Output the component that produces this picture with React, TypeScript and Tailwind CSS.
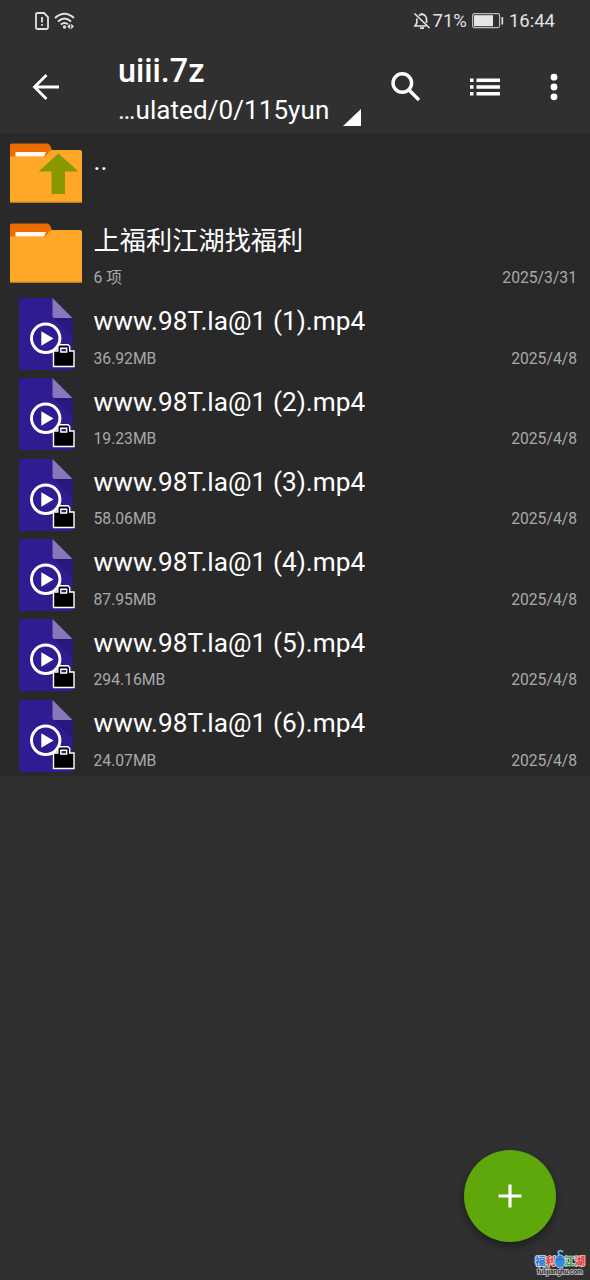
type Entry = {
    name: string;
    kind: 'up' | 'folder' | 'video';
    info?: string;
    date?: string;
};

const entries: Entry[] = [
    { name: '..', kind: 'up' },
    { name: '上福利江湖找福利', kind: 'folder', info: '6 项', date: '2025/3/31' },
    { name: 'www.98T.la@1 (1).mp4', kind: 'video', info: '36.92MB', date: '2025/4/8' },
    { name: 'www.98T.la@1 (2).mp4', kind: 'video', info: '19.23MB', date: '2025/4/8' },
    { name: 'www.98T.la@1 (3).mp4', kind: 'video', info: '58.06MB', date: '2025/4/8' },
    { name: 'www.98T.la@1 (4).mp4', kind: 'video', info: '87.95MB', date: '2025/4/8' },
    { name: 'www.98T.la@1 (5).mp4', kind: 'video', info: '294.16MB', date: '2025/4/8' },
    { name: 'www.98T.la@1 (6).mp4', kind: 'video', info: '24.07MB', date: '2025/4/8' },
];

const FolderIcon = ({ up }: { up?: boolean }) => (
    <svg viewBox="0 0 72 72" className="h-[72px] w-[72px] shrink-0">
        <path d="M0 24V8.500Q0 6.500 2 6.500H37Q39 6.500 40 8.500L43 15V24Z" fill="#ef6c00" />
        <path d="M0 19.500H35L39.500 14.500Q41 13 43 13H70Q72 13 72 15V65.500H0Z" fill="#ffa726" />
        <path d="M5.500 15H36L34 19.500H5.500Z" fill="#fff8ee" />
        <path d="M0 64.500H72V65.500H0Z" fill="#dc8d20" />
        {up && <path d="M48.300 16.500L68.500 34.500H55V57H41.500V34.500H28.500Z" fill="#889800" />}
    </svg>
);

const VideoIcon = () => (
    <svg viewBox="0 0 72 72" className="h-[72px] w-[72px] shrink-0">
        <path d="M11 0H42.500L62.500 20V72H11Q9 72 9 70V2Q9 0 11 0Z" fill="#311b92" />
        <path d="M44 20H62.500V39Z" fill="#2a177e" />
        <path d="M42.500 0L62.500 20H44.500Q42.500 20 42.500 18Z" fill="#8778b9" />
        <circle cx="35.700" cy="40.300" r="14.200" fill="none" stroke="#fff" strokeWidth="3" />
        <path d="M31.300 33.300L43.500 40.500L31.300 47.800Z" fill="#fff" />
        <path
            d="M43.500 53H47.800V48.500L49.500 46.800H58L59.700 48.500V53H64V68.500H43.500Z"
            fill="#000"
            stroke="#fff"
            strokeWidth="1.400"
        />
        <path d="M50.800 54V50.300H56.700V54Z" fill="#311b92" stroke="#fff" strokeWidth="1.400" />
    </svg>
);

const StatusBar = () => (
    <div className="flex h-10 items-center pl-[35px] pr-[35px] pt-[2px] text-[#e2e2e2]">
        <svg viewBox="0 0 14 18" className="h-[18px] w-[14px]" fill="none" stroke="currentColor" strokeWidth="1.800">
            <path d="M2.500 1H9L13 5V15.500Q13 17 11.500 17H2.500Q1 17 1 15.500V2.500Q1 1 2.500 1Z" />
            <path d="M7 5V10.500M7 12V13.800" />
        </svg>
        <svg viewBox="0 0 22 18" className="ml-[5px] h-[18px] w-[22px]" fill="none" stroke="currentColor" strokeWidth="1.900">
            <path d="M1 6Q10.500 -2.500 20 6M4 9.500Q10.500 3.500 17 9.500M6.800 12.500Q10.500 9.500 14 12.200" />
            <circle cx="10.500" cy="15" r="1.700" fill="currentColor" stroke="none" />
            <path d="M16.200 11.800V17.200L13.200 14.500ZM17.200 11.800V17.200L20 14.500Z" fill="currentColor" stroke="none" />
        </svg>
        <svg
            viewBox="0 0 18 18"
            className="ml-auto mr-[2px] h-[18px] w-[18px]"
            fill="none"
            stroke="currentColor"
            strokeWidth="1.700"
        >
            <path d="M1.500 1.500L16.500 16" />
            <path d="M6 3.500Q9 1.300 12 3.500Q13.500 5 13.500 7V11M3.800 6.500V11L2 14H13" />
            <path d="M7 16.200H11M9 1V2.500" />
        </svg>
        <span className="text-[18.5px] leading-6">71%</span>
        <svg viewBox="0 0 32 16" className="ml-[5px] h-4 w-8">
            <rect x="0.600" y="0.600" width="27" height="14" rx="1.800" fill="none" stroke="#bbb" strokeWidth="1.200" />
            <rect x="2" y="2.200" width="19" height="11" fill="#e6e6e6" />
            <path d="M30.300 4V11.500" stroke="#ddd" strokeWidth="1.700" />
        </svg>
        <span className="ml-[5px] text-[18.5px] leading-6">16:44</span>
    </div>
);

const Toolbar = () => (
    <div className="flex h-[93px] text-white">
        <svg
            viewBox="0 0 28 28"
            className="ml-8 mt-[33px] h-7 w-7 shrink-0"
            fill="none"
            stroke="currentColor"
            strokeWidth="2.800"
        >
            <path d="M27 14H3M14.500 2L2.500 14L14.500 26" />
        </svg>
        <div className="ml-[58px] w-[243px]">
            <div className="mt-[12px] text-[32.4px] font-medium leading-[38px]">uiii.7z</div>
            <div className="mt-[4px] flex items-end justify-between text-[26px] leading-8 tracking-[0.08px]">
                <span>…ulated/0/115yun</span>
                <svg viewBox="0 0 18 17" className="h-[17px] w-[18px]">
                    <path d="M0 17L18 0V17Z" fill="#fff" />
                </svg>
            </div>
        </div>
        <svg
            viewBox="0 0 30 30"
            className="ml-[30px] mt-[32px] h-[30px] w-[30px] shrink-0"
            fill="none"
            stroke="currentColor"
            strokeWidth="3.400"
        >
            <circle cx="11.300" cy="11" r="9.300" />
            <path d="M18 18L28 28" />
        </svg>
        <svg viewBox="0 0 30 18" className="ml-[49px] mt-[38px] h-[18px] w-[30px] shrink-0" fill="currentColor">
            <path d="M0 0.500H3.500V4H0ZM0 7.300H3.500V10.800H0ZM0 14H3.500V17.500H0ZM6.500 0.500H30V4H6.500ZM6.500 7.300H30V10.800H6.500ZM6.500 14H30V17.500H6.500Z" />
        </svg>
        <svg viewBox="0 0 8 28" className="ml-[50px] mt-[33px] h-7 w-2 shrink-0" fill="currentColor">
            <circle cx="4" cy="4.200" r="3.400" />
            <circle cx="4" cy="14" r="3.400" />
            <circle cx="4" cy="23.800" r="3.400" />
        </svg>
    </div>
);

const FileRow = ({ entry }: { entry: Entry }) => (
    <div className="flex h-[80.4px] pl-[10px] pr-[13px]">
        <div className="mr-[11.5px] pt-[4px]">
            {entry.kind === 'video' ? <VideoIcon /> : <FolderIcon up={entry.kind === 'up'} />}
        </div>
        <div className={entry.kind === 'up' ? 'flex-1 pt-[12.4px]' : 'flex-1 pt-[11.4px]'}>
            <div className="h-8 text-[26.2px] leading-8 tracking-[0.04px] text-white">{entry.name}</div>
            {entry.info && (
                <div className="mt-[11.4px] flex h-5 justify-between text-[15.7px] leading-5 text-[#a9a9a9]">
                    <span>{entry.info}</span>
                    <span>{entry.date}</span>
                </div>
            )}
        </div>
    </div>
);

const SiteBadge = () => (
    <div className="absolute bottom-[4px] right-[5px] w-[50px]">
        <div className="flex h-[13px] items-center justify-between text-[10.5px] font-black leading-[13px] [paint-order:stroke_fill] [-webkit-text-stroke:1.5px_#dcdcdc]">
            <span className="flex">
                <span className="text-[#2f80dd]">福</span>
                <span className="text-[#e64545]">利</span>
            </span>
            <span className="flex">
                <span className="text-[#35a853]">江</span>
                <span className="text-[#e64545]">湖</span>
            </span>
        </div>
        <div className="text-center text-[6.5px] font-bold leading-[8px] text-[#222] [paint-order:stroke_fill] [-webkit-text-stroke:1.5px_#ccc]">
            fulijianghu.com
        </div>
        <svg viewBox="0 0 12 20" className="absolute -top-[6px] left-[19px] h-5 w-3">
            <path d="M6 6Q3 4 5 2Q7 1 9 3" fill="none" stroke="#6db3ea" strokeWidth="1.800" />
            <ellipse cx="6" cy="12.500" rx="5.300" ry="6.500" fill="#2e8de0" stroke="#a8d2f4" />
            <path d="M2 10.500H10M6 6V10.500" stroke="#1968b8" strokeWidth="0.800" />
        </svg>
    </div>
);

const App = () => {
    return (
        <div className="relative h-[1280px] w-[590px] overflow-hidden bg-[#303030] font-[Roboto,'Noto_Sans_CJK_SC',sans-serif]">
            <StatusBar />
            <Toolbar />
            <div className="bg-[#292929]">
                {entries.map((entry) => (
                    <FileRow key={entry.name} entry={entry} />
                ))}
            </div>
            <button className="absolute bottom-[38px] right-[34.5px] flex h-[92px] w-[92px] items-center justify-center rounded-full bg-[#5ea80c] shadow-[0_4px_8px_rgba(0,0,0,0.4)]">
                <svg viewBox="0 0 24 24" className="h-6 w-6" stroke="#fff" strokeWidth="3.200">
                    <path d="M12 0.500V23.500M0.500 12H23.500" />
                </svg>
            </button>
            <SiteBadge />
        </div>
    );
};

export default App;
